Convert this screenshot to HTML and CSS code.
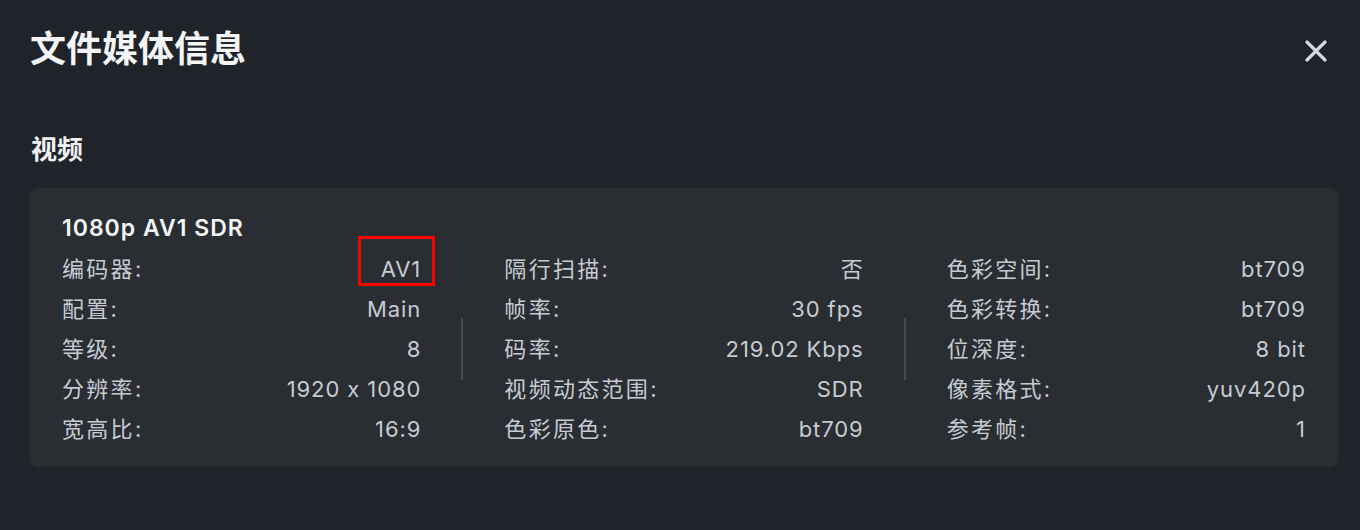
FILE: index.html
```html
<!DOCTYPE html>
<html lang="zh-CN">
<head>
    <meta charset="UTF-8">
    <meta name="viewport" content="width=device-width, initial-scale=1.0">
    <title>文件媒体信息</title>
    <link rel="stylesheet" href="styles.css">
</head>
<body>
    <header class="dialog-header">
        <h1 class="dialog-title">文件媒体信息</h1>
        <button class="close-btn" aria-label="关闭">
            <svg width="22" height="22" viewBox="0 0 22 22">
                <path d="M2 2 L20 20 M20 2 L2 20" stroke="currentColor" stroke-width="3.2" stroke-linecap="round"/>
            </svg>
        </button>
    </header>

    <h2 class="section-title">视频</h2>

    <div class="stream-card">
        <div class="stream-name">1080p AV1 SDR</div>
        <div class="stream-grid">
            <dl class="stream-col">
                <div class="row"><dt>编码器:</dt><dd><span class="marked">AV1</span></dd></div>
                <div class="row"><dt>配置:</dt><dd>Main</dd></div>
                <div class="row"><dt>等级:</dt><dd>8</dd></div>
                <div class="row"><dt>分辨率:</dt><dd>1920 x 1080</dd></div>
                <div class="row"><dt>宽高比:</dt><dd>16:9</dd></div>
            </dl>
            <div class="divider"></div>
            <dl class="stream-col">
                <div class="row"><dt>隔行扫描:</dt><dd>否</dd></div>
                <div class="row"><dt>帧率:</dt><dd>30 fps</dd></div>
                <div class="row"><dt>码率:</dt><dd>219.02 Kbps</dd></div>
                <div class="row"><dt>视频动态范围:</dt><dd>SDR</dd></div>
                <div class="row"><dt>色彩原色:</dt><dd>bt709</dd></div>
            </dl>
            <div class="divider"></div>
            <dl class="stream-col">
                <div class="row"><dt>色彩空间:</dt><dd>bt709</dd></div>
                <div class="row"><dt>色彩转换:</dt><dd>bt709</dd></div>
                <div class="row"><dt>位深度:</dt><dd>8 bit</dd></div>
                <div class="row"><dt>像素格式:</dt><dd>yuv420p</dd></div>
                <div class="row"><dt>参考帧:</dt><dd>1</dd></div>
            </dl>
        </div>
    </div>
</body>
</html>
```

FILE: styles.css
```css
html, body {
    margin: 0;
    padding: 0;
    background: #202329;
    font-family: 'Inter', 'Noto Sans CJK SC', sans-serif;
    font-feature-settings: "calt" 0;
    color: #c6cbd3;
    overflow: hidden;
}

body {
    width: 1360px;
    height: 530px;
    padding: 0 22px 0 30px;
    box-sizing: border-box;
}

.dialog-header {
    display: flex;
    justify-content: space-between;
    align-items: center;
    padding-top: 27px;
}

.dialog-title {
    margin: 0;
    font-size: 36px;
    line-height: 44px;
    font-weight: 600;
    color: #f4f5f7;
}

.close-btn {
    background: none;
    border: none;
    padding: 0;
    margin: 3px 11px 0 0;
    width: 22px;
    height: 22px;
    color: #d3d8df;
    cursor: pointer;
}

.close-btn svg {
    display: block;
}

.section-title {
    margin: 61px 0 20px 1px;
    font-size: 26px;
    line-height: 36px;
    font-weight: 600;
    color: #f0f1f3;
}

.stream-card {
    background: #2a2d32;
    border-radius: 8px;
    padding: 25px 33px 18px 32px;
}

.stream-name {
    font-size: 23px;
    line-height: 30px;
    font-weight: 600;
    letter-spacing: 1px;
    color: #f4f5f7;
    margin-bottom: 6px;
}

.stream-grid {
    display: flex;
    align-items: center;
}

.stream-col {
    flex: 1;
    margin: 0;
}

.row {
    display: flex;
    justify-content: space-between;
    font-size: 22px;
    line-height: 40px;
}

.row dt, .row dd {
    margin: 0;
}

.row dt {
    letter-spacing: 2.3px;
}

.row dd {
    letter-spacing: 0.9px;
    margin-right: -0.9px;
}

.divider {
    width: 2px;
    height: 62px;
    background: #464a51;
    margin: 0 41px;
}

.marked {
    position: relative;
    display: inline-block;
}

.marked::after {
    content: "";
    position: absolute;
    top: -13px;
    right: -14px;
    width: 77px;
    height: 50px;
    border: 3px solid #ff0000;
    box-sizing: border-box;
}
```
